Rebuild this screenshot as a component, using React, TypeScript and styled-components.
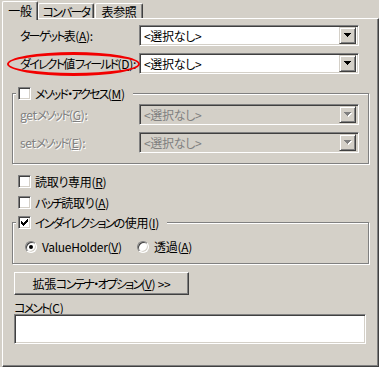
import React from 'react'
import styled, { createGlobalStyle } from 'styled-components'

const face = '#d4d0c8'
const shadow = '#808080'
const dark = '#404040'

const GlobalStyle = createGlobalStyle`
  html, body {
    margin: 0;
    padding: 0;
    background: ${face};
  }
  * {
    box-sizing: border-box;
  }
`

const Root = styled.div`
  width: 379px;
  height: 367px;
  padding: 1px 0 0 2px;
  background: ${face};
  color: #000;
  font-family: 'Noto Sans CJK JP', 'Noto Sans', sans-serif;
  font-size: 12px;
  line-height: 13px;
  letter-spacing: -0.3px;
  font-feature-settings: 'palt';
`

// katakana runs are set tighter, like the narrow UI font of the dialog
const K = styled.span`
  letter-spacing: -1.8px;
`

const TabStrip = styled.div`
  display: flex;
  align-items: flex-end;
  height: 17px;
`

const Tab = styled.div<{ $active?: boolean; $width: number; $gap?: number }>`
  position: relative;
  z-index: ${(p) => (p.$active ? 1 : 0)};
  width: ${(p) => p.$width}px;
  height: ${(p) => (p.$active ? 19 : 15)}px;
  margin-bottom: ${(p) => (p.$active ? -2 : 0)}px;
  margin-left: ${(p) => p.$gap ?? 0}px;
  display: flex;
  align-items: ${(p) => (p.$active ? 'flex-start' : 'center')};
  padding-top: ${(p) => (p.$active ? 2 : 0)}px;
  justify-content: center;
  white-space: nowrap;
  background: ${face};
  border-top: 1px solid #fff;
  border-left: 1px solid #fff;
  border-right: 1px solid ${dark};
  border-top-left-radius: 2px;
  border-top-right-radius: 2px;
  box-shadow: inset -1px 0 0 ${shadow};
`

const Panel = styled.div`
  width: 377px;
  height: 349px;
  padding: 1px;
  border: 1px solid;
  border-color: #fff ${dark} ${dark} #fff;
  box-shadow: inset -1px -1px 0 ${shadow};
  display: flex;
  flex-direction: column;
`

const FieldRow = styled.div<{ $top?: number; $indent?: number }>`
  position: relative;
  display: flex;
  align-items: center;
  height: 21px;
  margin-top: ${(p) => p.$top ?? 0}px;
  padding-left: ${(p) => p.$indent ?? 16}px;
`

const Label = styled.span<{ $disabled?: boolean }>`
  width: 119px;
  flex: none;
  white-space: nowrap;
  color: ${(p) => (p.$disabled ? shadow : '#000')};
  text-shadow: ${(p) => (p.$disabled ? '1px 1px 0 #fff' : 'none')};
`

const U = styled.span`
  text-decoration: underline;
  text-underline-offset: 1px;
`

const Ellipse = styled.span`
  position: absolute;
  left: 3px;
  top: -1px;
  width: 133px;
  height: 24px;
  border: solid #f20000;
  border-width: 3px 2px;
  border-radius: 50%;
  pointer-events: none;
`

const Sunken = styled.div<{ $disabled?: boolean }>`
  border: 1px solid;
  border-color: ${shadow} #fff #fff ${shadow};
  box-shadow: inset 1px 1px 0 ${dark}, inset -1px -1px 0 ${face};
  background: ${(p) => (p.$disabled ? face : '#fff')};
`

const Combo = styled(Sunken)`
  width: 220px;
  height: 21px;
  display: flex;
  align-items: center;
  padding: 2px;
`

const ComboText = styled.span<{ $disabled?: boolean }>`
  flex: 1;
  padding-left: 2px;
  white-space: nowrap;
  color: ${(p) => (p.$disabled ? shadow : '#000')};
`

const ComboButton = styled.div`
  width: 17px;
  height: 17px;
  flex: none;
  display: flex;
  align-items: center;
  justify-content: center;
  background: ${face};
  border: 1px solid;
  border-color: ${face} ${dark} ${dark} ${face};
  box-shadow: inset 1px 1px 0 #fff, inset -1px -1px 0 ${shadow};
`

const Group = styled.fieldset<{ $top: number; $padTop: number; $padBottom: number }>`
  margin: ${(p) => p.$top}px 0 0 8px;
  width: 357px;
  min-width: 0;
  padding: ${(p) => p.$padTop}px 0 ${(p) => p.$padBottom}px 0;
  border: 1px solid ${shadow};
  box-shadow: 1px 1px 0 #fff, inset 1px 1px 0 #fff;
`

const Legend = styled.legend`
  margin-left: 3px;
  padding: 0 8px 0 2px;
  height: 13px;
  background: ${face};
  display: flex;
  align-items: center;
  gap: 4px;
  white-space: nowrap;
`

const GroupRows = styled.div`
  display: flex;
  flex-direction: column;
  gap: 7px;
`

const CheckRow = styled.div<{ $top: number }>`
  display: flex;
  align-items: center;
  gap: 4px;
  height: 13px;
  margin-top: ${(p) => p.$top}px;
  padding-left: 14px;
  white-space: nowrap;
`

const Box = styled.span`
  width: 13px;
  height: 13px;
  flex: none;
  display: flex;
  align-items: center;
  justify-content: center;
  background: #fff;
  border: 1px solid;
  border-color: ${shadow} #fff #fff ${shadow};
  box-shadow: inset 1px 1px 0 ${dark}, inset -1px -1px 0 ${face};
`

const RadioRow = styled.div`
  display: grid;
  grid-template-columns: 112px auto;
  align-items: center;
  height: 12px;
  padding-left: 12px;
`

const RadioOption = styled.span`
  display: flex;
  align-items: center;
  gap: 5px;
  white-space: nowrap;
`

const Radio = styled.span<{ $checked?: boolean }>`
  position: relative;
  width: 12px;
  height: 12px;
  flex: none;
  border-radius: 50%;
  background: #fff;
  border: 1px solid;
  border-color: ${shadow} #fff #fff ${shadow};
  box-shadow: inset 1px 1px 0 ${dark}, inset -1px -1px 0 ${face};
  &::after {
    content: '';
    display: ${(p) => (p.$checked ? 'block' : 'none')};
    position: absolute;
    left: 3px;
    top: 3px;
    width: 4px;
    height: 4px;
    border-radius: 50%;
    background: #000;
  }
`

const PushButton = styled.div`
  margin: 8px 0 0 10px;
  width: 175px;
  height: 23px;
  display: flex;
  align-items: center;
  justify-content: center;
  white-space: pre;
  background: ${face};
  border: 1px solid;
  border-color: #fff ${dark} ${dark} #fff;
  box-shadow: inset -1px -1px 0 ${shadow};
`

const CommentLabel = styled.div`
  margin: 6px 0 0 10px;
  height: 13px;
`

const CommentBox = styled(Sunken)`
  margin-left: 10px;
  width: 352px;
  height: 30px;
`

const Arrow: React.FC<{ disabled?: boolean }> = ({ disabled }) => (
  <svg width="8" height="5" viewBox="0 0 8 5" shapeRendering="crispEdges">
    {disabled && <polygon points="1,1 8,1 4.5,5" fill="#fff" />}
    <polygon points="0,0 7,0 3.5,4" fill={disabled ? shadow : '#000'} />
  </svg>
)

const Check: React.FC = () => (
  <svg width="7" height="7" viewBox="0 0 7 7" shapeRendering="crispEdges">
    <rect x="0" y="2" width="1" height="3" />
    <rect x="1" y="3" width="1" height="3" />
    <rect x="2" y="4" width="1" height="3" />
    <rect x="3" y="3" width="1" height="3" />
    <rect x="4" y="2" width="1" height="3" />
    <rect x="5" y="1" width="1" height="3" />
    <rect x="6" y="0" width="1" height="3" />
  </svg>
)

const CheckBox: React.FC<{ checked?: boolean }> = ({ checked }) => <Box>{checked && <Check />}</Box>

const ComboBox: React.FC<{ disabled?: boolean }> = ({ disabled }) => (
  <Combo $disabled={disabled}>
    <ComboText $disabled={disabled}>&lt;選択なし&gt;</ComboText>
    <ComboButton>
      <Arrow disabled={disabled} />
    </ComboButton>
  </Combo>
)

export default function App() {
  return (
    <Root>
      <GlobalStyle />
      <TabStrip>
        <Tab $active $width={36}>一般</Tab>
        <Tab $width={56}>
          <K>コンバータ</K>
        </Tab>
        <Tab $width={48} $gap={1}>表参照</Tab>
      </TabStrip>
      <Panel>
        <FieldRow $top={5}>
          <Label>
            <K>ターゲット</K>表(<U>A</U>):
          </Label>
          <ComboBox />
        </FieldRow>
        <FieldRow $top={7}>
          <Label>
            <K>ダイレクト</K>値<K>フィールド</K>(<U>D</U>):
          </Label>
          <ComboBox />
          <Ellipse />
        </FieldRow>

        <Group $top={13} $padTop={4} $padBottom={10}>
          <Legend>
            <CheckBox />
            <span>
              <K>メソッド・アクセス</K>(<U>M</U>)
            </span>
          </Legend>
          <GroupRows>
            <FieldRow $indent={7}>
              <Label $disabled>
                get<K>メソッド</K>(<U>G</U>):
              </Label>
              <ComboBox disabled />
            </FieldRow>
            <FieldRow $indent={7}>
              <Label $disabled>
                set<K>メソッド</K>(<U>E</U>):
              </Label>
              <ComboBox disabled />
            </FieldRow>
          </GroupRows>
        </Group>

        <CheckRow $top={11}>
          <CheckBox />
          <span>
            読取り専用(<U>R</U>)
          </span>
        </CheckRow>
        <CheckRow $top={8}>
          <CheckBox />
          <span>
            <K>バッチ</K>読取り(<U>A</U>)
          </span>
        </CheckRow>

        <Group $top={7} $padTop={11} $padBottom={11}>
          <Legend>
            <CheckBox checked />
            <span>
              <K>インダイレクション</K>の使用(<U>I</U>)
            </span>
          </Legend>
          <RadioRow>
            <RadioOption>
              <Radio $checked />
              <span>
                ValueHolder(<U>V</U>)
              </span>
            </RadioOption>
            <RadioOption>
              <Radio />
              <span>
                透過(<U>A</U>)
              </span>
            </RadioOption>
          </RadioRow>
        </Group>

        <PushButton>
          拡張<K>コンテナ・オプション</K>(<U>V</U>) &gt;&gt;
        </PushButton>
        <CommentLabel>
          <K>コメント</K>(<U>C</U>)
        </CommentLabel>
        <CommentBox />
      </Panel>
    </Root>
  )
}
